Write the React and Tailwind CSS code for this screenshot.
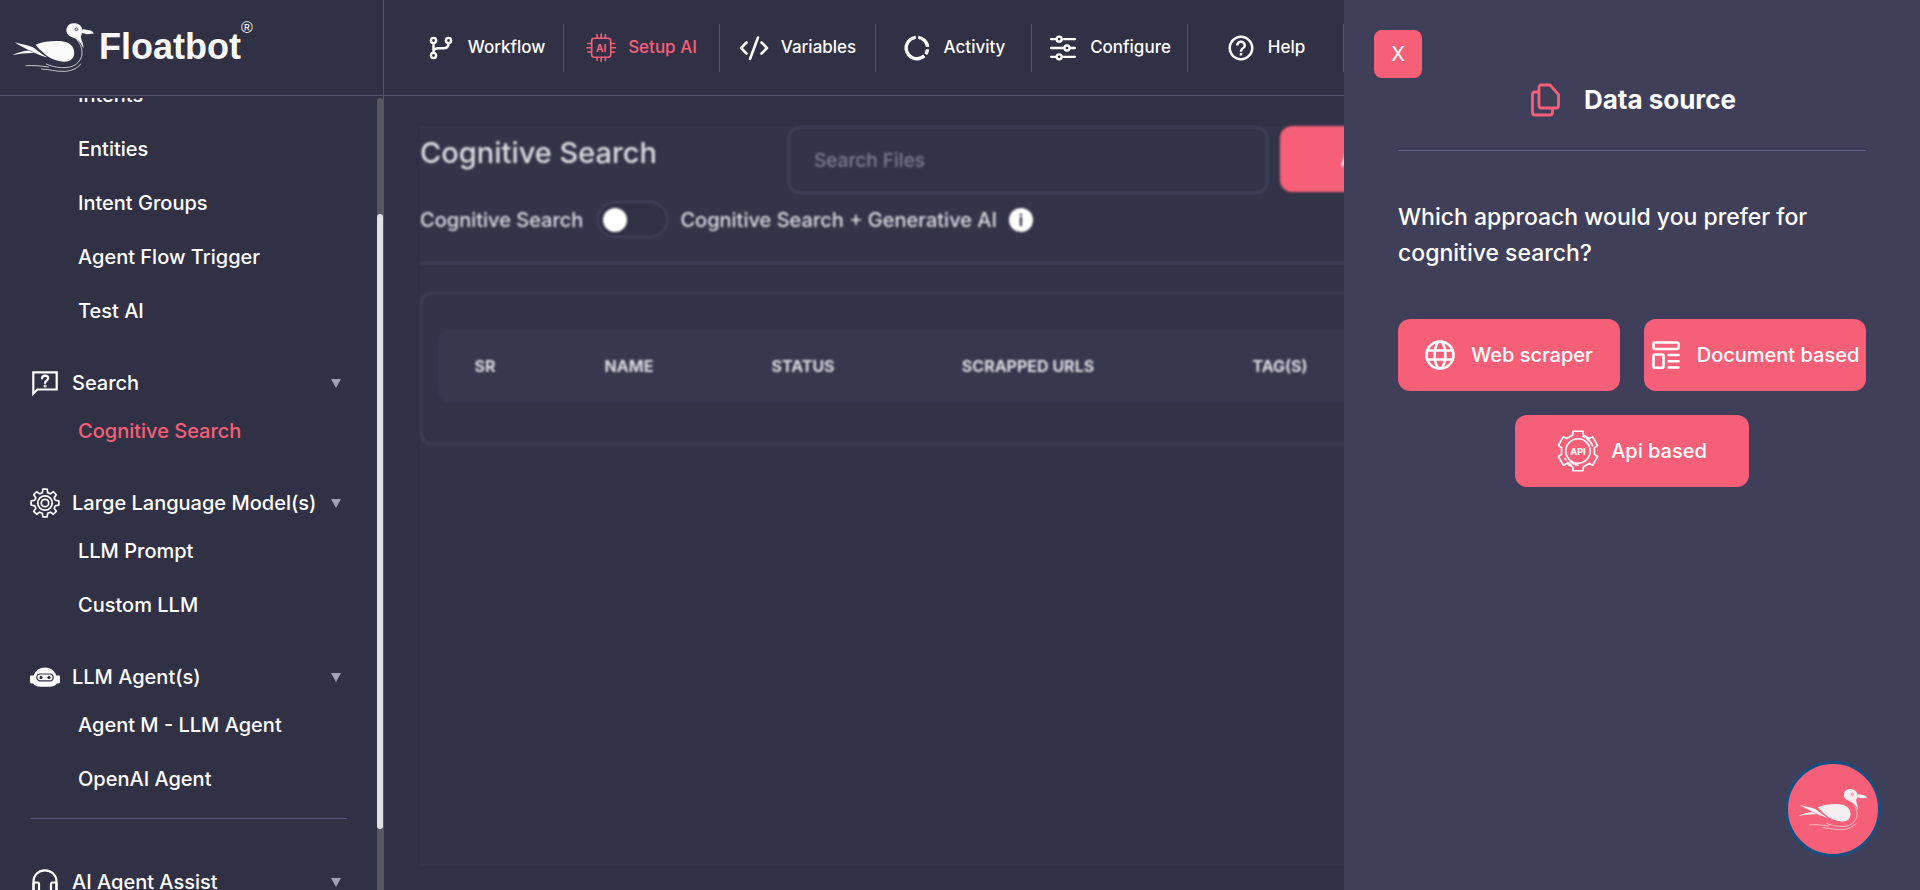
import React from "react";
import { MdHelpOutline } from "react-icons/md";

function gearPath(cx, cy, teeth, outer, inner, topHalf, baseHalf) {
  const points = [];
  for (let i = 0; i < teeth; i += 1) {
    const mid = (i * 2 * Math.PI) / teeth - Math.PI / 2;
    [
      [inner, -baseHalf],
      [outer, -topHalf],
      [outer, topHalf],
      [inner, baseHalf],
    ].forEach(([radius, offset]) => {
      const angle = mid + offset;
      points.push(`${(cx + radius * Math.cos(angle)).toFixed(2)} ${(cy + radius * Math.sin(angle)).toFixed(2)}`);
    });
  }
  return `M${points.join("L")}Z`;
}

const SMALL_GEAR = gearPath(15, 15, 8, 14, 10.6, 0.15, 0.26);
const API_GEAR = gearPath(21, 21, 6, 20.4, 16.8, 0.25, 0.32);

function Duck({ className, eye }) {
  return (
    <svg viewBox="36 68 248 154" className={className} aria-hidden="true" fill="currentColor">
      <path d="M222 72C208 71 198 82 199 95C200 108 212 112 224 117C236 122 244 132 250 147C252 134 243 124 243 112C244 104 249 102 248 92C245 80 236 72 222 72Z" />
      <circle cx="229" cy="90" r="4" fill="none" stroke={eye} strokeWidth="2.5" />
      <path d="M249 90L270 93Q281 97 282 103L262 105L246 101Z" />
      <path d="M106 137C130 126 165 124 190 127C215 131 226 150 222 168C218 184 203 190 185 187C160 184 145 175 132 163C122 155 112 147 106 137Z" />
      <path d="M42 129C65 135 90 140 98 144C110 152 125 166 142 175C120 170 88 156 42 129Z" />
      <path d="M36 168C52 159 70 156 84 154L104 162C80 161 60 164 36 168Z" />
      <g fill="none" stroke="currentColor" strokeWidth="2.2" strokeLinecap="round">
        <path d="M231 122C252 145 252 178 228 196C205 212 165 207 138 195" />
        <path d="M124 210C150 211 165 218 192 217C215 216 232 208 242 195" />
        <path d="M77 200C100 198 122 201 145 204" />
      </g>
    </svg>
  );
}

function Icon({ children, className = "size-[30px]", box = 30, width = 2 }) {
  return (
    <svg
      viewBox={`0 0 ${box} ${box}`}
      className={`${className} shrink-0`}
      fill="none"
      stroke="currentColor"
      strokeWidth={width}
      strokeLinecap="round"
      strokeLinejoin="round"
      aria-hidden="true"
    >
      {children}
    </svg>
  );
}

const WorkflowIcon = () => (
  <Icon width={2.4}>
    <circle cx="7.5" cy="7.5" r="2.6" />
    <circle cx="7.5" cy="22.5" r="2.6" />
    <circle cx="22.5" cy="7.5" r="2.6" />
    <path d="M7.5 10.5v9M22.5 10.5c0 3.5-2 4.8-5 4.8h-5c-3 0-5 1.2-5 4" />
  </Icon>
);

const ChipIcon = () => (
  <Icon width={1.6}>
    <rect x="5.7" y="5.2" width="19" height="19" rx="2.5" />
    <path d="M11 5V1.5M15.2 5V1M19.4 5V1.5M11 24.5V27.5M15.2 24.5V28.5M19.4 24.5V27.5M5.5 10.5H2M5.5 14.7H1M5.5 19H2M25 10.5H28.5M25 14.7H29.500M25 19H28.5" />
    <text x="15.2" y="18.5" textAnchor="middle" fontSize="10" fontWeight="700" fontFamily="Inter, sans-serif" fill="currentColor" stroke="none">
      AI
    </text>
  </Icon>
);

const CodeIcon = () => (
  <Icon width={2.6}>
    <path d="M7.5 9.5L2 15l5.5 5.500M22.5 9.500L28 15l-5.500 5.500M19 4.500L11 26" />
  </Icon>
);

const ActivityIcon = () => (
  <Icon width={3.4}>
    <g strokeLinecap="butt">
      <path d="M16.2 4.400A10.700 10.700 0 0 1 25.600 13.900" />
      <path d="M25.600 16.200A10.700 10.700 0 0 1 23.800 21.100" />
      <path d="M22.300 22.800A10.700 10.700 0 1 1 13.800 4.400" />
    </g>
  </Icon>
);

const SlidersIcon = () => (
  <Icon width={2.300}>
    <path d="M3 6.200h5.500M14 6.200h13M3 15h13M22 15h5M3 23.800h5.500M14 23.800h13" />
    <circle cx="11.200" cy="6.200" r="2.500" />
    <circle cx="19" cy="15" r="2.500" />
    <circle cx="11.200" cy="23.800" r="2.500" />
  </Icon>
);

const HelpIcon = () => <MdHelpOutline className="size-[30px] shrink-0" aria-hidden="true" />;

const QuestionBoxIcon = () => (
  <Icon width={2.2}>
    <path d="M3.300 25.500V4.300H26.700V21.500H7.300Z" strokeLinejoin="miter" />
    <path d="M12 10.300c.2-1.900 1.500-2.700 3-2.700 1.800 0 3.200 1 3.200 2.700 0 2.200-3.100 2.400-3.100 4.600" />
    <circle cx="15.100" cy="18" r=".5" />
  </Icon>
);

const GearIcon = () => (
  <Icon width={1.7}>
    <path d={SMALL_GEAR} />
    <circle cx="15" cy="15" r="7.200" />
    <circle cx="15" cy="15" r="3.700" />
  </Icon>
);

const RobotIcon = () => (
  <Icon>
    <path
      d="M15 5.500c-5.200 0-9.500 2.900-11.300 8H1.200c-.7 0-1.200.5-1.200 1.200v5.600c0 .7.500 1.200 1.200 1.200h2c1.500 2.200 4.200 3.300 7.300 3.300h9c3.100 0 5.800-1.100 7.300-3.300h2c.7 0 1.200-.5 1.200-1.200v-5.600c0-.7-.5-1.200-1.200-1.200h-2.500c-1.800-5.100-6.100-8-11.300-8Z"
      fill="currentColor"
      stroke="none"
    />
    <rect x="6.800" y="12" width="16.400" height="6.800" rx="3.400" stroke="#313145" strokeWidth="1.200" />
    <circle cx="11" cy="15.400" r="1.600" fill="#313145" stroke="none" />
    <circle cx="19" cy="15.400" r="1.600" fill="#313145" stroke="none" />
  </Icon>
);

const HeadsetIcon = () => (
  <Icon width={2.2}>
    <path d="M3.500 24V14.500C3.500 8 8.600 3.300 15 3.300S26.500 8 26.500 14.500V24" />
    <rect x="3.500" y="15.500" width="5.500" height="9" rx="1.500" />
    <rect x="21" y="15.500" width="5.500" height="9" rx="1.500" />
  </Icon>
);

const CopyIcon = () => (
  <Icon className="size-9" box={36} width={2.8}>
    <path d="M13.500 3H22L30.500 12.500V23.500Q30.500 26 28 26H13.500Q11 26 11 23.500V5.500Q11 3 13.500 3Z" />
    <path d="M10.500 10H7Q4.500 10 4.500 12.500V30.500Q4.500 33 7 33H22Q24.500 33 24.500 30.500V27" />
  </Icon>
);

const GlobeIcon = () => (
  <Icon width={2.6}>
    <circle cx="15" cy="15" r="13.500" />
    <ellipse cx="15" cy="15" rx="5.400" ry="13.500" />
    <path d="M2.500 10.500h25M2.500 19.500h25" />
  </Icon>
);

const TemplateIcon = () => (
  <Icon width={2.6}>
    <rect x="2.500" y="2.500" width="25" height="6.500" rx="1.500" />
    <rect x="2.500" y="14.500" width="10" height="13.300" rx="1.500" />
    <path d="M17.700 15h9.800M17.700 21.200h9.800M17.700 27.500h9.800" />
  </Icon>
);

const ApiIcon = () => (
  <Icon className="size-[42px]" box={42} width={1.6}>
    <path d={API_GEAR} />
    <circle cx="21" cy="21" r="12.200" />
    <path d="M26 6.600l1.500.6M29.300 8.300c2.900 1.800 5 4.200 6.200 7.400M8 28.500l.8 1.300M10.500 32.200c1 1 2.200 1.900 3.400 2.600M13 31.500c2.200 2 4.700 3.200 8 3.700" />
    <text x="21" y="24.500" textAnchor="middle" fontSize="9" fontWeight="800" fontFamily="Inter, sans-serif" fill="currentColor" stroke="none">
      API
    </text>
  </Icon>
);

const NAV = [
  { label: "Workflow", icon: WorkflowIcon },
  { label: "Setup AI", icon: ChipIcon, active: true },
  { label: "Variables", icon: CodeIcon },
  { label: "Activity", icon: ActivityIcon },
  { label: "Configure", icon: SlidersIcon },
  { label: "Help", icon: HelpIcon },
];

const SECTIONS = [
  {
    title: "Search",
    icon: QuestionBoxIcon,
    items: [{ label: "Cognitive Search", active: true }],
  },
  {
    title: "Large Language Model(s)",
    icon: GearIcon,
    items: [{ label: "LLM Prompt" }, { label: "Custom LLM" }],
  },
  {
    title: "LLM Agent(s)",
    icon: RobotIcon,
    items: [{ label: "Agent M - LLM Agent" }, { label: "OpenAI Agent" }],
  },
];

function SubItem({ label, active }) {
  return (
    <li>
      <a
        href="#"
        aria-current={active ? "page" : undefined}
        className={`block pl-12 text-xl leading-[54px] ${active ? "text-[#f65f78]" : "text-white"}`}
      >
        {label}
      </a>
    </li>
  );
}

function SectionHeader({ title, icon: SectionIcon }) {
  return (
    <button type="button" className="flex h-[42px] w-full items-center gap-3 text-left text-xl whitespace-nowrap">
      <SectionIcon />
      <span className="grow">{title}</span>
      <svg viewBox="0 0 10 9" className="mr-1.5 h-[9px] w-2.5 shrink-0 text-[#a0a1b4]" aria-hidden="true">
        <path d="M0 0H10L5 9Z" fill="currentColor" />
      </svg>
    </button>
  );
}

function Sidebar() {
  return (
    <aside className="flex w-96 shrink-0 border-r border-[#52526d] pt-0.5">
      <nav className="min-w-0 grow overflow-hidden px-[30px]" aria-label="Setup">
        <ul className="-mt-[30px]">
          {["Intents", "Entities", "Intent Groups", "Agent Flow Trigger", "Test AI"].map((label) => (
            <SubItem key={label} label={label} />
          ))}
        </ul>
        {SECTIONS.map((section) => (
          <section key={section.title} className="mt-6">
            <SectionHeader title={section.title} icon={section.icon} />
            <ul>
              {section.items.map((item) => (
                <SubItem key={item.label} {...item} />
              ))}
            </ul>
          </section>
        ))}
        <hr className="mt-3 mb-[42px] border-[#54587a]" />
        <SectionHeader title="AI Agent Assist" icon={HeadsetIcon} />
      </nav>
      <div className="w-1.5 shrink-0 rounded-t-full bg-[#57575f] pt-[116px]" aria-hidden="true">
        <div className="h-[91%] rounded-full bg-[#e1e1e1]" />
      </div>
    </aside>
  );
}

function Header() {
  return (
    <header className="flex h-24 shrink-0 border-b border-[#52526d]">
      <a href="#" className="flex w-96 shrink-0 items-start border-r border-[#52526d] pt-[22px] pl-3 text-[#fafafa]">
        <Duck className="h-[51px] w-[83px]" eye="#313145" />
        <span className="ml-1 font-['Liberation_Sans',Arial,sans-serif] text-4xl leading-[50px] font-bold">Floatbot</span>
        <span className="font-['Liberation_Sans',Arial,sans-serif] text-base leading-3">®</span>
      </a>
      <nav className="flex items-center pl-6" aria-label="Main">
        {NAV.map(({ label, icon: NavIcon, active }) => (
          <a
            key={label}
            href="#"
            className={`flex h-12 w-[156px] shrink-0 items-center justify-center gap-3 border-r border-[#52526d] text-[17px] ${
              active ? "text-[#f65f78]" : "text-white"
            }`}
          >
            <NavIcon />
            {label}
          </a>
        ))}
      </nav>
    </header>
  );
}

function FilesPage() {
  return (
    <main className="min-w-0 grow overflow-hidden pt-[30px] pr-9 pb-6 pl-9">
      <div className="h-full bg-[#343449] text-[#dcdce2] blur-[1px]">
        <div className="flex items-start">
          <h1 className="w-[368px] shrink-0 text-[29px] leading-[54px] font-medium">Cognitive Search</h1>
          <input
            type="search"
            aria-label="Search Files"
            placeholder="Search Files"
            className="h-[68px] w-[480px] shrink-0 rounded-xl border-2 border-[#41415a] bg-transparent px-6 text-[19px] placeholder:text-[#7c7c8d]"
          />
          <button type="button" className="ml-3 h-[66px] w-40 shrink-0 rounded-xl bg-[#f65f78] text-xl text-white">
            Add
          </button>
        </div>
        <div className="mt-[7px] flex h-[37px] items-center text-xl">
          <label htmlFor="search-mode">Cognitive Search</label>
          <input
            id="search-mode"
            type="checkbox"
            role="switch"
            className="ml-3.5 h-[37px] w-[71px] appearance-none rounded-full border-2 border-[#41415a] bg-[#313145] before:mt-[5px] before:ml-1 before:block before:size-6 before:rounded-full before:bg-white"
          />
          <span className="ml-3">Cognitive Search + Generative AI</span>
          <span className="ml-3 flex size-6 items-center justify-center rounded-full bg-white text-base font-bold text-[#343449]">i</span>
        </div>
        <hr className="mt-6 border-t-2 border-[#3f3f57]" />
        <div className="mt-7 rounded-xl border-2 border-[#3f3f57] px-4 pt-[35px] pb-10">
          <table className="w-full table-fixed rounded-xl bg-[#37374d]">
            <thead>
              <tr className="h-[74px] text-base">
                <th scope="col" className="w-[94px]">SR</th>
                <th scope="col" className="w-[194px]">NAME</th>
                <th scope="col" className="w-[154px]">STATUS</th>
                <th scope="col" className="w-[296px]">SCRAPPED URLS</th>
                <th scope="col" className="w-[208px]">TAG(S)</th>
                <td />
              </tr>
            </thead>
          </table>
        </div>
      </div>
    </main>
  );
}

function SourceButton({ label, icon: SourceIcon, className = "", gap = "gap-4" }) {
  return (
    <button
      type="button"
      className={`flex h-[72px] items-center justify-center rounded-xl bg-[#f65f78] text-xl whitespace-nowrap text-white ${gap} ${className}`}
    >
      <SourceIcon />
      {label}
    </button>
  );
}

function DataSourceDrawer() {
  return (
    <section
      role="dialog"
      aria-labelledby="drawer-title"
      className="fixed inset-y-0 right-0 w-[30%] bg-[#403f5a] px-[54px] pt-20"
    >
      <button type="button" aria-label="Close" className="absolute top-[30px] left-[30px] size-12 rounded-lg bg-[#f65f78] text-xl font-normal">
        X
      </button>
      <div className="flex h-[39px] items-center justify-center gap-5">
        <span className="text-[#f65f78]">
          <CopyIcon />
        </span>
        <h2 id="drawer-title" className="text-[26px] font-bold">Data source</h2>
      </div>
      <hr className="mt-[31px] border-[#5c6087]" />
      <p className="mt-12 text-[23px] leading-9">Which approach would you prefer for cognitive search?</p>
      <div className="mt-12 grid grid-cols-2 gap-6">
        <SourceButton label="Web scraper" icon={GlobeIcon} />
        <SourceButton label="Document based" icon={TemplateIcon} />
        <SourceButton label="Api based" icon={ApiIcon} gap="gap-3" className="col-span-2 w-1/2 justify-self-center" />
      </div>
    </section>
  );
}

export default function App() {
  return (
    <div className="flex h-screen flex-col overflow-hidden bg-[#313145] font-[Inter,sans-serif] font-medium text-white">
      <Header />
      <div className="flex min-h-0 grow">
        <Sidebar />
        <FilesPage />
      </div>
      <DataSourceDrawer />
      <button
        type="button"
        aria-label="Open chat"
        className="fixed right-[39px] bottom-[33px] flex size-24 items-center justify-center rounded-full border-3 border-[#174f80] bg-[#f65f78] text-[#f5eef0]"
      >
        <Duck className="h-[43px] w-[70px]" eye="#f65f78" />
      </button>
    </div>
  );
}
